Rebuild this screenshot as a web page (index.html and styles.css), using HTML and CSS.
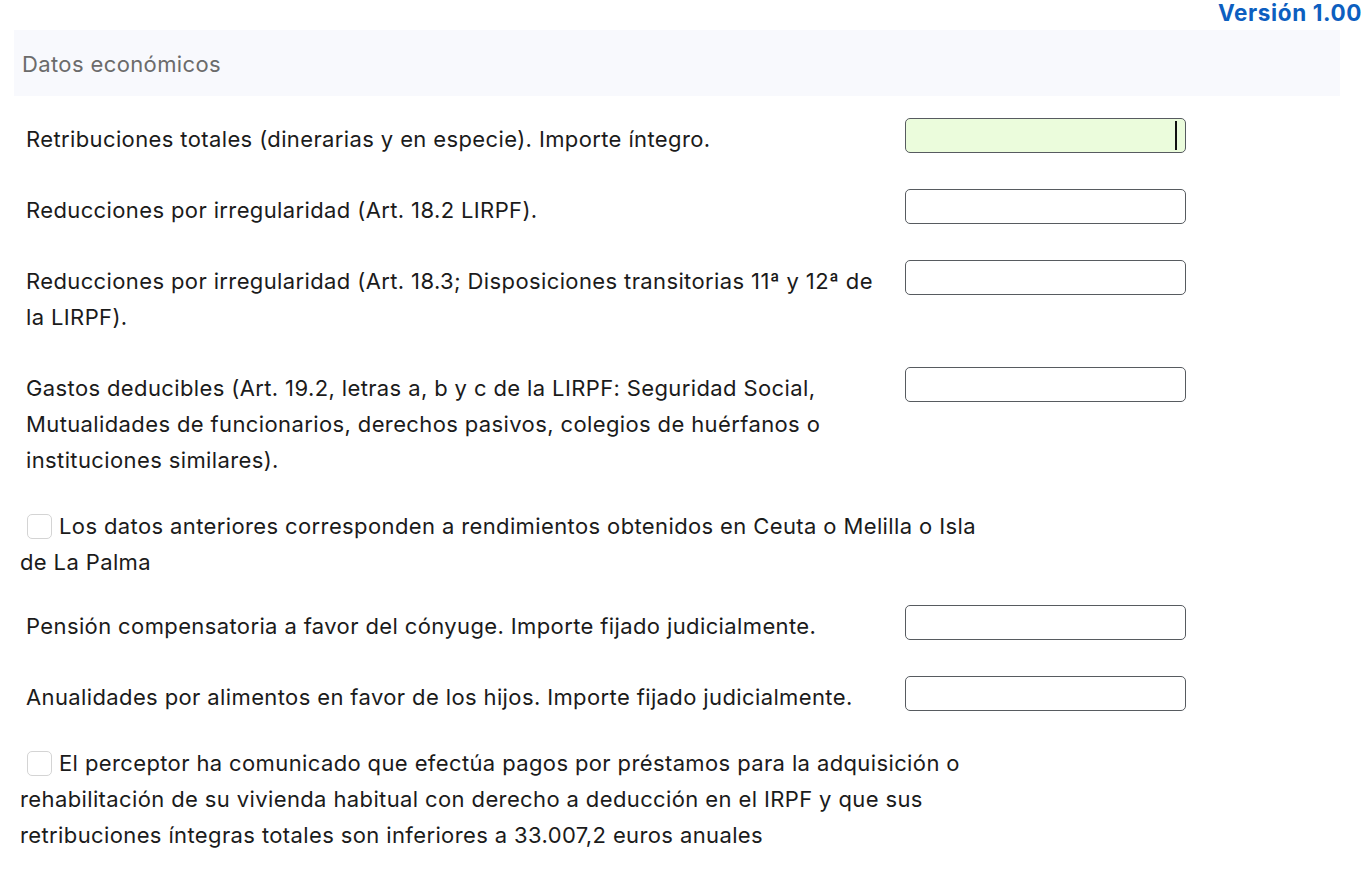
FILE: index.html
```html
<!DOCTYPE html>
<html lang="es">
<head>
<meta charset="utf-8">
<title>Datos económicos</title>
<link rel="stylesheet" href="styles.css">
</head>
<body>
<div class="page">
  <div class="version">Versión 1.00</div>
  <div class="section-head">Datos económicos</div>
  <div class="form">
    <div class="row">
      <div class="label">Retribuciones totales (dinerarias y en especie). Importe íntegro.</div>
      <div class="field-wrap">
        <input class="field field-active" type="text">
        <span class="caret"></span>
      </div>
    </div>
    <div class="row">
      <div class="label">Reducciones por irregularidad (Art. 18.2 LIRPF).</div>
      <div class="field-wrap"><input class="field" type="text"></div>
    </div>
    <div class="row">
      <div class="label">Reducciones por irregularidad (Art. 18.3; Disposiciones transitorias 11ª y 12ª de la LIRPF).</div>
      <div class="field-wrap"><input class="field" type="text"></div>
    </div>
    <div class="row">
      <div class="label">Gastos deducibles (Art. 19.2, letras a, b y c de la LIRPF: Seguridad Social, Mutualidades de funcionarios, derechos pasivos, colegios de huérfanos o instituciones similares).</div>
      <div class="field-wrap"><input class="field" type="text"></div>
    </div>
    <div class="check-row"><span class="box"></span>Los datos anteriores corresponden a rendimientos obtenidos en Ceuta o Melilla o Isla de La Palma</div>
    <div class="row">
      <div class="label">Pensión compensatoria a favor del cónyuge. Importe fijado judicialmente.</div>
      <div class="field-wrap"><input class="field" type="text"></div>
    </div>
    <div class="row">
      <div class="label">Anualidades por alimentos en favor de los hijos. Importe fijado judicialmente.</div>
      <div class="field-wrap"><input class="field" type="text"></div>
    </div>
    <div class="check-row"><span class="box"></span>El perceptor ha comunicado que efectúa pagos por préstamos para la adquisición o rehabilitación de su vivienda habitual con derecho a deducción en el IRPF y que sus retribuciones íntegras totales son inferiores a 33.007,2 euros anuales</div>
  </div>
</div>
</body>
</html>
```
FILE: styles.css
```css
html, body {
  margin: 0;
  padding: 0;
  background: #ffffff;
}
body {
  font-family: Inter, "Noto Sans", "Liberation Sans", sans-serif;
  color: #1b1b1b;
  font-size: 22px;
  line-height: 36px;
  letter-spacing: 0.38px;
}
.page {
  padding: 0 4px 0 14px;
}
.version {
  text-align: right;
  color: #0d5fc0;
  font-weight: 700;
  font-size: 22.5px;
  letter-spacing: 0.6px;
  line-height: 25px;
  height: 30px;
}
.section-head {
  width: 1326px;
  height: 66px;
  box-sizing: border-box;
  background: #f8f9fd;
  color: #6b6b6b;
  padding-left: 8px;
  padding-top: 2px;
  display: flex;
  align-items: center;
}
.form {
  padding-top: 22px;
}
.row {
  display: flex;
  align-items: flex-start;
  margin-bottom: 32px;
  padding-left: 12px;
}
.label {
  width: 862px;
  margin-right: 17px;
  padding-top: 3px;
}
.field-wrap {
  position: relative;
  width: 281px;
  height: 35px;
}
.field {
  display: block;
  width: 281px;
  height: 35px;
  box-sizing: border-box;
  margin: 0;
  border: 1.5px solid #575b60;
  border-radius: 5px;
  background: #ffffff;
  font: inherit;
}
.field-active {
  background: #ebfcdc;
}
.caret {
  position: absolute;
  left: 270px;
  top: 3px;
  width: 2px;
  height: 29px;
  background: #111111;
}
.check-row {
  width: 985px;
  padding-left: 6px;
  margin-top: -2px;
  margin-bottom: 25px;
}
.box {
  display: inline-block;
  width: 25px;
  height: 25px;
  box-sizing: border-box;
  border: 1.5px solid #d4d4d4;
  border-radius: 5px;
  vertical-align: -5px;
  margin-left: 7px;
  margin-right: 7px;
}
```
